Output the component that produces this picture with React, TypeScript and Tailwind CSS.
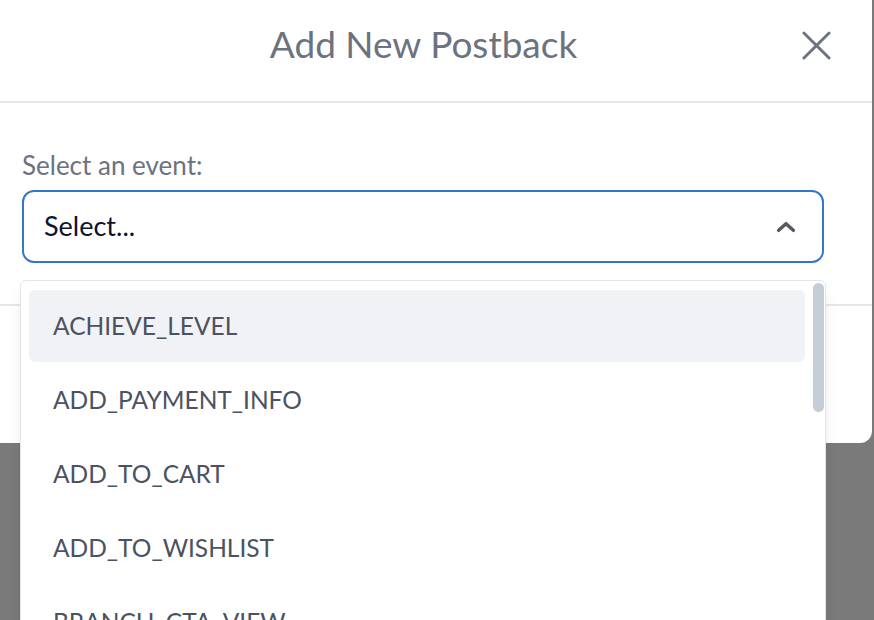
import { FC } from "react";

const events = [
  "ACHIEVE_LEVEL",
  "ADD_PAYMENT_INFO",
  "ADD_TO_CART",
  "ADD_TO_WISHLIST",
  "BRANCH_CTA_VIEW",
];

const ChevronUp: FC = () => (
  <svg width="32" height="32" viewBox="0 0 24 24" fill="none" stroke="#555a61" strokeWidth="2.6" strokeLinecap="round" strokeLinejoin="round">
    <path d="M6.5 14.5l5.5-5 5.5 5" />
  </svg>
);

const CloseIcon: FC = () => (
  <svg width="29" height="29" viewBox="0 0 30 30" fill="none" stroke="#6b7280" strokeWidth="3" strokeLinecap="round">
    <path d="M2 2l26 26M28 2L2 28" />
  </svg>
);

export default function App() {
  return (
    <div className="h-[620px] w-[874px] overflow-hidden bg-[#7a7a7a] font-['Lato',sans-serif]">
      <div className="w-[872px] rounded-br-xl bg-white">
        <div className="relative flex h-[103px] justify-center border-b-2 border-[#e5e7eb] pr-[25px] pt-[20px]">
          <h2 className="text-[37px] leading-[48px] text-[#6b7280]">Add New Postback</h2>
          <button className="absolute right-[41px] top-[31px]">
            <CloseIcon />
          </button>
        </div>
        <div className="h-[203px] border-b-2 border-[#e5e7eb] pl-[22px] pr-[48px] pt-[45px]">
          <p className="text-[26px] leading-[34px] text-[#6b7280]">Select an event:</p>
          <div className="relative mt-[8px]">
            <div className="flex h-[73px] items-center justify-between rounded-xl border-2 border-[#3676c8] pl-[20px] pr-[20px]">
              <span className="text-[27px] text-[#0d1430]">Select...</span>
              <ChevronUp />
            </div>
            <div className="absolute -left-[2px] -right-[2px] top-[90px] z-10 h-[400px] rounded-md border border-[#e2e4e8] bg-white shadow-lg">
              <div className="flex gap-[8px] pl-[8px] pr-[1px] pt-[9px]">
                <ul className="flex flex-1 flex-col gap-[2px]">
                  {events.map((e, i) => (
                    <li
                      key={e}
                      className={`flex h-[72px] items-center rounded-md px-[24px] text-[24.5px] text-[#4b5260] ${i === 0 ? "bg-[#f1f2f5]" : ""}`}
                    >
                      {e}
                    </li>
                  ))}
                </ul>
                <div className="-mt-[7px] h-[129px] w-[11px] rounded-full bg-[#c5cdd7]" />
              </div>
            </div>
          </div>
        </div>
        <div className="h-[137px]" />
      </div>
    </div>
  );
}
